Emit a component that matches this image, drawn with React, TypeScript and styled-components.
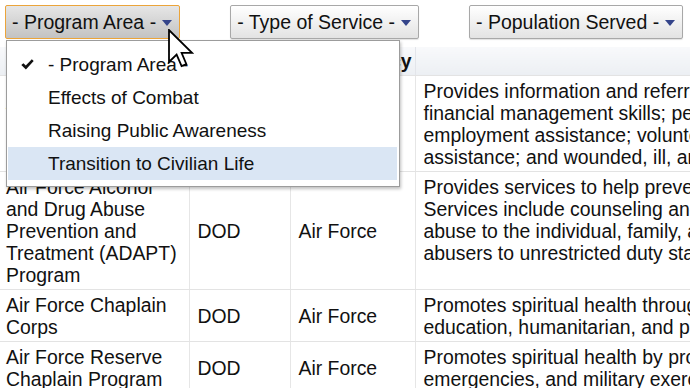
import React from "react";
import styled, { createGlobalStyle } from "styled-components";

const GlobalStyle = createGlobalStyle`
  html, body {
    margin: 0;
    padding: 0;
    background: #ffffff;
    overflow: hidden;
  }
  body {
    font-family: "Liberation Sans", Arial, sans-serif;
    color: #111;
  }
`;

const Page = styled.div`
  position: relative;
  width: 690px;
  height: 388px;
  overflow: hidden;
`;

const FilterBar = styled.div`
  display: flex;
  align-items: flex-start;
  gap: 50px;
  padding: 5px 0 8px 5px;
`;

const FilterWrap = styled.div`
  position: relative;
`;

const FilterButton = styled.div<{ $active?: boolean }>`
  box-sizing: border-box;
  height: 34px;
  display: inline-flex;
  align-items: center;
  gap: 6px;
  padding: 0 7px 0 6px;
  font-size: 19.5px;
  color: #111;
  white-space: nowrap;
  border-radius: 2px;
  border: 1px solid ${(p) => (p.$active ? "#eba43a" : "#a8a8a8")};
  background: ${(p) =>
    p.$active
      ? "linear-gradient(#e6e6e6, #c3c3c3)"
      : "linear-gradient(#ffffff, #e3e3e3)"};
  box-shadow: ${(p) => (p.$active ? "none" : "0 1px 1px rgba(0,0,0,0.12)")};
`;

const Arrow = styled.span`
  width: 0;
  height: 0;
  margin-top: 2px;
  border-left: 5px solid transparent;
  border-right: 5px solid transparent;
  border-top: 6px solid #34448a;
`;

const Menu = styled.div`
  position: absolute;
  top: 35px;
  left: 1px;
  width: 394px;
  box-sizing: border-box;
  padding: 7px 2px 6px 1px;
  background: #ffffff;
  border: 1px solid #9c9c9c;
  box-shadow: 1px 2px 3px rgba(0, 0, 0, 0.25);
  z-index: 5;
`;

const MenuItem = styled.div<{ $hover?: boolean }>`
  height: 33px;
  display: flex;
  align-items: center;
  padding-left: 13px;
  font-size: 19px;
  color: #111;
  white-space: nowrap;
  background: ${(p) => (p.$hover ? "#dae6f4" : "transparent")};
`;

const CheckSlot = styled.span`
  width: 27px;
  display: inline-flex;
  align-items: center;
`;

const Cursor = styled.svg`
  position: absolute;
  left: 168px;
  top: 29px;
  z-index: 10;
`;

const Table = styled.table`
  border-collapse: collapse;
  table-layout: fixed;
  width: 1100px;
  font-size: 19.4px;
  line-height: 22px;
  color: #111;
`;

const HeadCell = styled.th`
  padding: 3px 8px 3px 8px;
  font-weight: bold;
  text-align: center;
  white-space: nowrap;
  background: linear-gradient(#f8f9fb, #eceff3);
  border-left: 1px solid #e3e5ea;
  border-bottom: 1px solid #e3e3e3;
  &:first-child {
    border-left: none;
  }
`;

const Cell = styled.td<{ $top?: boolean; $first?: boolean }>`
  padding: 4px 8px 3px ${(p) => (p.$first ? "6px" : "8px")};
  vertical-align: ${(p) => (p.$top ? "top" : "middle")};
  text-align: left;
  border-left: ${(p) => (p.$first ? "none" : "1px solid #e6e6e6")};
  border-bottom: 1px solid #e3e3e3;
`;

const Line = styled.div`
  white-space: nowrap;
`;

function CheckIcon() {
  return (
    <svg width="13" height="11" viewBox="0 0 13 11">
      <polygon points="0.3,6 2.4,4.2 4.8,6.6 10.8,0.3 12.7,2 4.9,10.4" fill="#111" />
    </svg>
  );
}

type Row = {
  name: string[];
  dept: string;
  agency: string;
  desc: string[];
};

const rows: Row[] = [
  {
    name: ["Air Force Airman &", "Family Readiness", "Center"],
    dept: "DOD",
    agency: "Air Force",
    desc: [
      "Provides information and referral services on relocation;",
      "financial management skills; personal and family readiness;",
      "employment assistance; volunteer resources; transition",
      "assistance; and wounded, ill, and injured support.",
    ],
  },
  {
    name: [
      "Air Force Alcohol",
      "and Drug Abuse",
      "Prevention and",
      "Treatment (ADAPT)",
      "Program",
    ],
    dept: "DOD",
    agency: "Air Force",
    desc: [
      "Provides services to help prevent alcohol and drug abuse.",
      "Services include counseling and education about substance",
      "abuse to the individual, family, and community, and return",
      "abusers to unrestricted duty status.",
    ],
  },
  {
    name: ["Air Force Chaplain", "Corps"],
    dept: "DOD",
    agency: "Air Force",
    desc: [
      "Promotes spiritual health through worship, counseling,",
      "education, humanitarian, and pastoral care.",
    ],
  },
  {
    name: ["Air Force Reserve", "Chaplain Program"],
    dept: "DOD",
    agency: "Air Force",
    desc: [
      "Promotes spiritual health by providing support during",
      "emergencies, and military exercises.",
    ],
  },
];

const menuItems = [
  "- Program Area -",
  "Effects of Combat",
  "Raising Public Awareness",
  "Transition to Civilian Life",
];

export default function App() {
  return (
    <>
      <GlobalStyle />
      <Page>
        <FilterBar>
          <FilterWrap>
            <FilterButton $active>
              - Program Area -<Arrow />
            </FilterButton>
            <Menu>
              {menuItems.map((item, i) => (
                <MenuItem key={item} $hover={i === 3}>
                  <CheckSlot>{i === 0 ? <CheckIcon /> : null}</CheckSlot>
                  {item}
                </MenuItem>
              ))}
            </Menu>
          </FilterWrap>
          <FilterWrap>
            <FilterButton>
              - Type of Service -<Arrow />
            </FilterButton>
          </FilterWrap>
          <FilterWrap>
            <FilterButton>
              - Population Served -<Arrow />
            </FilterButton>
          </FilterWrap>
        </FilterBar>
        <Table>
          <colgroup>
            <col style={{ width: 189 }} />
            <col style={{ width: 101 }} />
            <col style={{ width: 125 }} />
            <col style={{ width: 685 }} />
          </colgroup>
          <thead>
            <tr>
              <HeadCell>Program Name</HeadCell>
              <HeadCell>Dept.</HeadCell>
              <HeadCell>Sub-Agency</HeadCell>
              <HeadCell>Description</HeadCell>
            </tr>
          </thead>
          <tbody>
            {rows.map((r) => (
              <tr key={r.name.join(" ")}>
                <Cell $first>
                  {r.name.map((l) => (
                    <Line key={l}>{l}</Line>
                  ))}
                </Cell>
                <Cell>{r.dept}</Cell>
                <Cell>{r.agency}</Cell>
                <Cell $top>
                  {r.desc.map((l) => (
                    <Line key={l}>{l}</Line>
                  ))}
                </Cell>
              </tr>
            ))}
          </tbody>
        </Table>
        <Cursor width="26" height="40" viewBox="0 0 13 20">
          <polygon
            points="0.5,0.5 0.5,16.5 4.3,12.8 6.8,18.6 9.2,17.6 6.8,11.9 12,11.9"
            fill="#ffffff"
            stroke="#000000"
            strokeWidth="0.9"
            strokeLinejoin="miter"
          />
        </Cursor>
      </Page>
    </>
  );
}
